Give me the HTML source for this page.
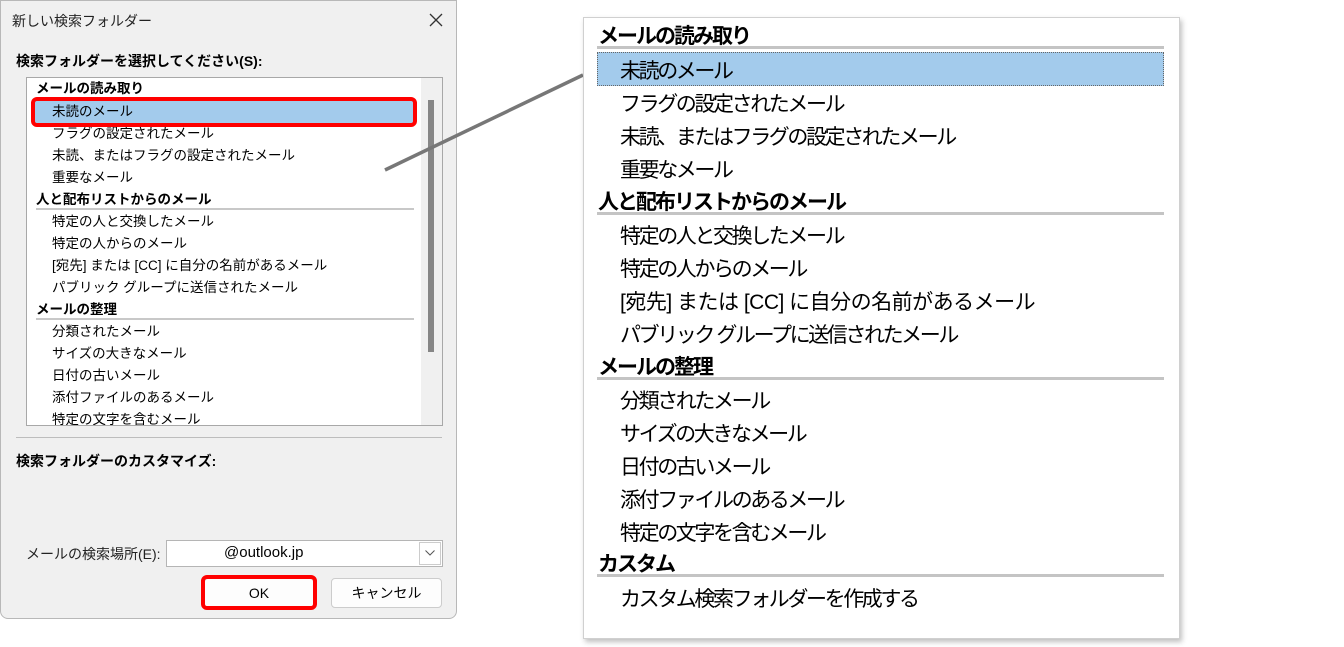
<!DOCTYPE html>
<html><head><meta charset="utf-8"><style>
*{margin:0;padding:0;box-sizing:border-box}
body{width:1344px;height:647px;background:#fff;position:relative;overflow:hidden;font-family:"Liberation Sans","Noto Sans CJK JP",sans-serif;color:#000}
.abs{position:absolute;white-space:nowrap}
#dlg{position:absolute;left:0;top:0;width:457px;height:619px;background:#f0f0f0;border:1px solid #b8b8b8;border-radius:0 0 8px 8px}
#list{position:absolute;left:25px;top:76px;width:417px;height:349px;background:#fff;border:1px solid #a8a8a8;overflow:hidden}
.l{position:absolute;font-size:13.5px;line-height:22px;white-space:nowrap}
.lh{font-weight:bold;left:9px}
.li{left:25px}
.lsep{position:absolute;left:9px;width:378px;height:2px;background:#c8c8c8}
#rp{position:absolute;left:583px;top:17px;width:597px;height:622px;background:#fff;border:1px solid #d0d0d0;box-shadow:2px 3px 5px rgba(0,0,0,.25);overflow:hidden}
.r{position:absolute;font-size:21px;line-height:33px;white-space:nowrap;letter-spacing:-2.4px}
.rh{font-weight:bold;left:14px;letter-spacing:-2px}
.ri{left:36px}
.rsep{position:absolute;left:13px;width:567px;height:3px;background:#c4c4c4}
.btn{position:absolute;background:#fdfdfd;border:1px solid #ccc;border-radius:4px;font-size:14px;text-align:center;line-height:28px}
</style></head><body>
<div id="dlg">
 <div class="abs" style="left:11px;top:10px;font-size:14px;color:#222">新しい検索フォルダー</div>
 <svg style="position:absolute;left:428px;top:12px" width="14" height="14"><path d="M1 1L13 13M13 1L1 13" stroke="#333" stroke-width="1.3"/></svg>
 <div class="abs" style="left:15px;top:50px;font-size:14px;font-weight:bold">検索フォルダーを選択してください(S):</div>
 <div id="list">
  <div style="position:absolute;left:394px;top:0;width:22px;height:349px;background:#f0f0f0"></div>
  <div style="position:absolute;left:401px;top:22px;width:6px;height:252px;background:#868686"></div>
  <div class="l lh" style="top:0">メールの読み取り</div>
  <div style="position:absolute;left:7px;top:22px;width:380px;height:25px;background:#a3cbec;border:1px dotted #555"></div>
  <div class="l li" style="top:23px">未読のメール</div>
  <div class="l li" style="top:45px">フラグの設定されたメール</div>
  <div class="l li" style="top:67px">未読、またはフラグの設定されたメール</div>
  <div class="l li" style="top:89px">重要なメール</div>
  <div class="l lh" style="top:111px">人と配布リストからのメール</div>
  <div class="lsep" style="top:130px"></div>
  <div class="l li" style="top:133px">特定の人と交換したメール</div>
  <div class="l li" style="top:155px">特定の人からのメール</div>
  <div class="l li" style="top:177px">[宛先] または [CC] に自分の名前があるメール</div>
  <div class="l li" style="top:199px">パブリック グループに送信されたメール</div>
  <div class="l lh" style="top:221px">メールの整理</div>
  <div class="lsep" style="top:240px"></div>
  <div class="l li" style="top:243px">分類されたメール</div>
  <div class="l li" style="top:265px">サイズの大きなメール</div>
  <div class="l li" style="top:287px">日付の古いメール</div>
  <div class="l li" style="top:309px">添付ファイルのあるメール</div>
  <div class="l li" style="top:331px">特定の文字を含むメール</div>
 </div>
 <div style="position:absolute;left:30px;top:96px;width:386px;height:30px;border:4px solid #f00;border-radius:6px"></div>
 <div style="position:absolute;left:15px;top:436px;width:426px;height:1px;background:#bdbdbd"></div>
 <div class="abs" style="left:15px;top:450px;font-size:14px;font-weight:bold">検索フォルダーのカスタマイズ:</div>
 <div class="abs" style="left:25px;top:543px;font-size:14px;color:#222">メールの検索場所(E):</div>
 <div style="position:absolute;left:165px;top:539px;width:277px;height:27px;background:#fff;border:1px solid #b5b5b5"></div>
 <div class="abs" style="left:223px;top:543px;font-size:15px">@outlook.jp</div>
 <div style="position:absolute;left:418px;top:541px;width:22px;height:23px;border:1px solid #ccc;background:#fff"></div>
 <svg style="position:absolute;left:424px;top:549px" width="10" height="6"><path d="M0.5 0.5L5 5L9.5 0.5" stroke="#555" fill="none"/></svg>
 <div class="btn" style="left:203px;top:577px;width:110px;height:30px">OK</div>
 <div style="position:absolute;left:200px;top:574px;width:116px;height:35px;border:4px solid #f00;border-radius:6px"></div>
 <div class="btn" style="left:330px;top:577px;width:111px;height:30px">キャンセル</div>
</div>
<svg style="position:absolute;left:0;top:0" width="1344" height="647"><line x1="385" y1="170" x2="583" y2="75" stroke="#777" stroke-width="3.5"/></svg>
<div id="rp">
 <div class="r rh" style="top:2px">メールの読み取り</div>
 <div class="rsep" style="top:28px"></div>
 <div style="position:absolute;left:13px;top:34px;width:567px;height:34px;background:#a3cbec;border:1px dotted #666"></div>
 <div class="r ri" style="top:37px">未読のメール</div>
 <div class="r ri" style="top:70px">フラグの設定されたメール</div>
 <div class="r ri" style="top:103px">未読、またはフラグの設定されたメール</div>
 <div class="r ri" style="top:136px">重要なメール</div>
 <div class="r rh" style="top:168px">人と配布リストからのメール</div>
 <div class="rsep" style="top:194px"></div>
 <div class="r ri" style="top:202px">特定の人と交換したメール</div>
 <div class="r ri" style="top:235px">特定の人からのメール</div>
 <div class="r ri" style="top:268px;letter-spacing:-0.5px">[宛先] または [CC] に自分の名前があるメール</div>
 <div class="r ri" style="top:301px">パブリック グループに送信されたメール</div>
 <div class="r rh" style="top:333px">メールの整理</div>
 <div class="rsep" style="top:359px"></div>
 <div class="r ri" style="top:367px">分類されたメール</div>
 <div class="r ri" style="top:400px">サイズの大きなメール</div>
 <div class="r ri" style="top:433px">日付の古いメール</div>
 <div class="r ri" style="top:466px">添付ファイルのあるメール</div>
 <div class="r ri" style="top:499px">特定の文字を含むメール</div>
 <div class="r rh" style="top:530px">カスタム</div>
 <div class="rsep" style="top:556px"></div>
 <div class="r ri" style="top:565px">カスタム検索フォルダーを作成する</div>
</div>
</body></html>
